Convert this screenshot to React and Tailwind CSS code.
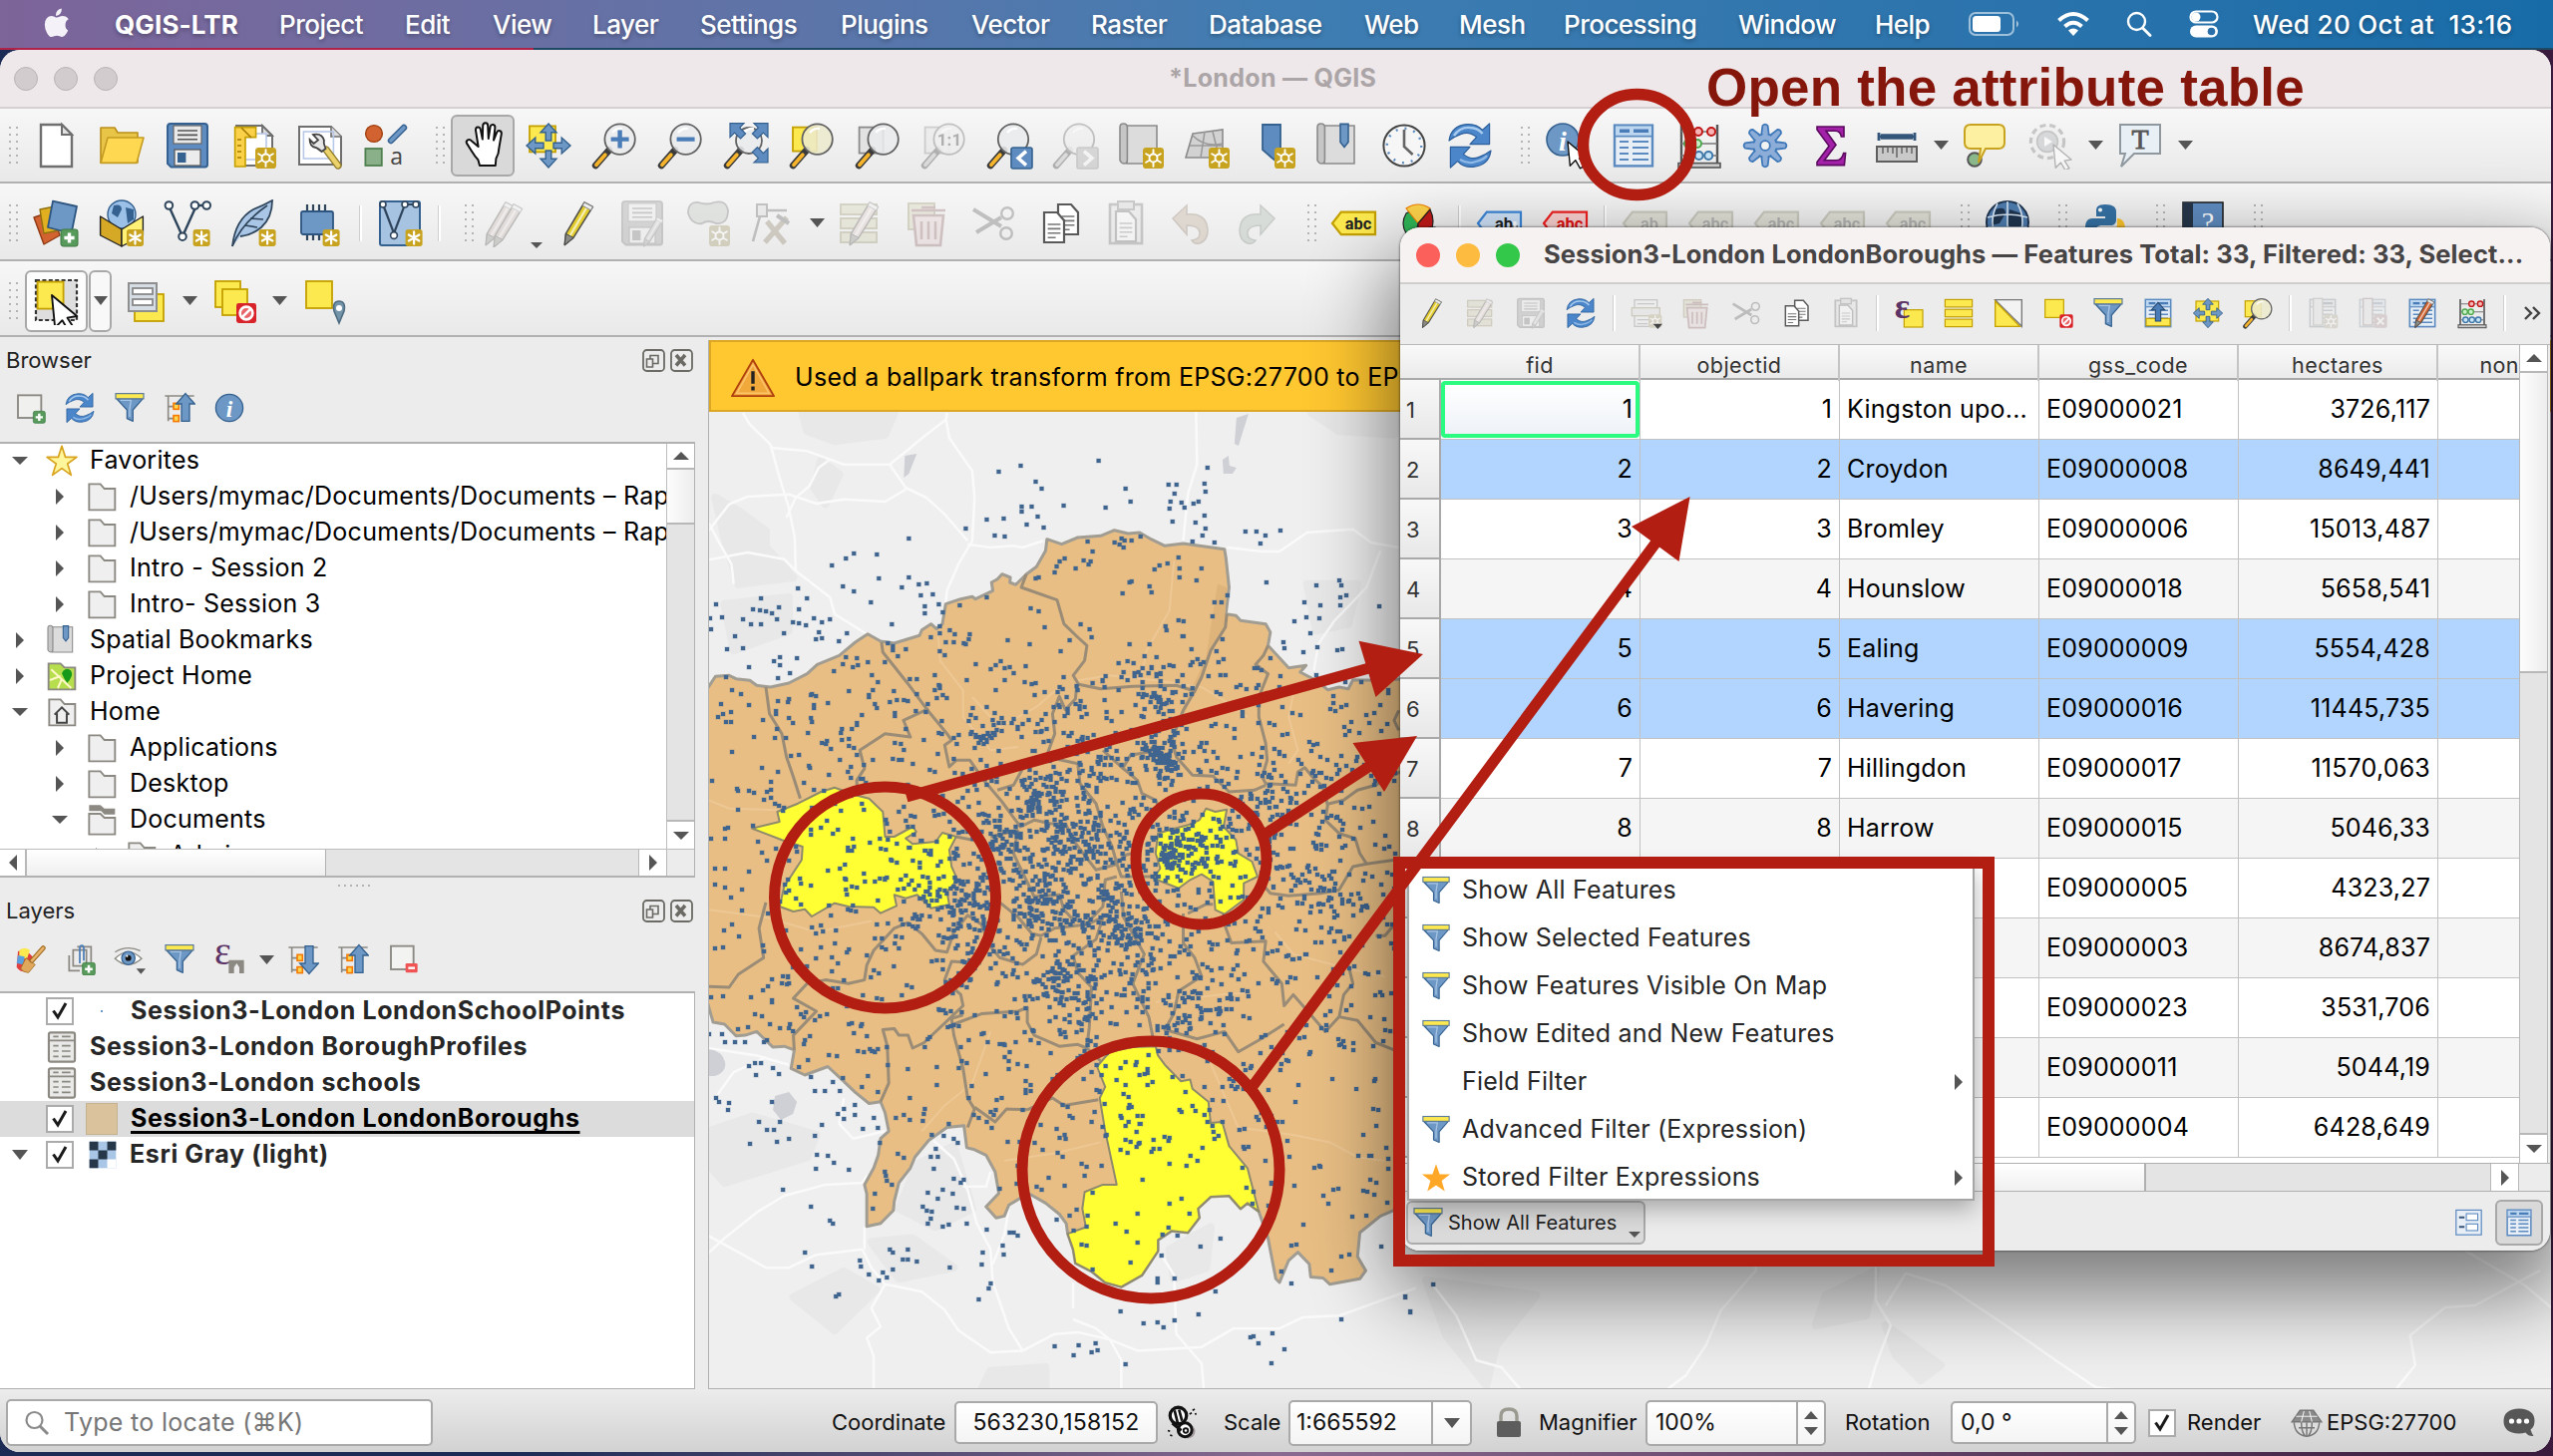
import React from "react";

/* ---------- small icon parts ---------- */
const G = "#6f6f6f";
const Gold = ({ x = 13, y = 13, s = 10.5 }) => (
  <g transform={`translate(${x} ${y}) scale(${s / 10})`}>
    <rect width="10" height="10" rx="1.6" fill="#c8a31f" />
    <path d="M5 1.4v7.2M1.9 3.2l6.2 3.6M8.1 3.2L1.9 6.8" stroke="#fff" strokeWidth="1.3" strokeLinecap="round" />
  </g>
);
const Gear = ({ x = 13, y = 13, s = 10.5 }) => (
  <g transform={`translate(${x} ${y}) scale(${s / 10})`}>
    <rect width="10" height="10" rx="1.6" fill="#c8a31f" />
    <path d="M5 1v8M1.5 3l7 4M8.5 3l-7 4" stroke="#fff" strokeWidth=".9" strokeLinecap="round" />
    <circle cx="5" cy="5" r="1.9" fill="#c8a31f" stroke="#fff" strokeWidth=".9" />
  </g>
);
const Plus = ({ x = 14, y = 14, s = 9 }) => (
  <g transform={`translate(${x} ${y}) scale(${s / 10})`}>
    <rect width="10" height="10" rx="1.6" fill="#589a5b" stroke="#3d7a41" strokeWidth=".6" />
    <path d="M5 2v6M2 5h6" stroke="#fff" strokeWidth="2" />
  </g>
);
const Stop = ({ x = 14, y = 14, s = 10 }) => (
  <g transform={`translate(${x} ${y}) scale(${s / 10})`}>
    <rect width="10" height="10" rx="1.2" fill="#d9232a" />
    <circle cx="5" cy="5" r="3.2" fill="#e8656a" stroke="#fff" strokeWidth="1.3" />
    <path d="M2.9 7.1l4.2-4.2" stroke="#fff" strokeWidth="1.3" />
  </g>
);
const Lens = ({ cx = 14.8, cy = 8.8, r = 7.6, fill = "#e9eaec" }) => (
  <g>
    <path d="M9.4 14.2L2.6 22" stroke="#3b3b3b" strokeWidth="3.4" strokeLinecap="round" />
    <path d="M7.4 16.6L3 21.6" stroke="#f5b42b" strokeWidth="1.9" strokeLinecap="round" />
    <circle cx={cx} cy={cy} r={r} fill={fill} fillOpacity=".88" stroke="#636363" strokeWidth=".9" />
    <path d="M11 5.5q2-2.6 5-2" stroke="#fff" strokeWidth="1.1" fill="none" />
  </g>
);
const Y = (p) => <rect fill="#fce94f" stroke="#c4a000" strokeWidth=".9" {...p} />;
const Arr = ({ t }) => <path transform={t} d="M0-11L4-6.6H1.4V-2.5h-2.8V-6.6H-4z" fill="#6d97c4" stroke="#34618f" strokeWidth=".7" />;
const Cross = () => (
  <g transform="translate(12 12)">
    <Arr t="" /><Arr t="rotate(90)" /><Arr t="rotate(180)" /><Arr t="rotate(270)" />
  </g>
);
const PencilShape = ({ c = "#e3cd2d", t = "" }) => (
  <g transform={t}>
    <path d="M15.5 1.5l4.2 2.2L10 19.2l-4.4 3.6.6-5.6z" fill={c} stroke="#55534c" strokeWidth=".8" strokeLinejoin="round" />
    <path d="M17.4 2.8L8.2 18.3" stroke="#fff" strokeOpacity=".65" strokeWidth="1.1" />
    <path d="M15.5 1.5l4.2 2.2-1 1.7-4.1-2.3z" fill="#eee" stroke="#888" strokeWidth=".5" />
    <path d="M6.2 17.2l3.8 2-4.4 3.6z" fill="#8a8a86" stroke="#444" strokeWidth=".5" />
  </g>
);
const FloppyShape = () => (
  <g>
    <path d="M3.5 1h17q1.5 0 1.5 1.5v19q0 1.2-1.2 1.2H3.8L2 21V2.5Q2 1 3.5 1z" fill="#5f8cc0" stroke="#34618f" strokeWidth="1" />
    <rect x="5" y="2" width="14" height="9" fill="#e9e9e9" stroke="#666" strokeWidth=".6" />
    <path d="M7 4.5h10M7 6.7h10M7 8.9h10" stroke="#555" strokeWidth=".8" />
    <rect x="5.5" y="14" width="13" height="8" fill="#ececec" stroke="#555" strokeWidth=".6" />
    <rect x="7" y="15.5" width="4.2" height="5" fill="#34618f" />
  </g>
);
const GridShape = () => (
  <g>
    <rect x="2.5" y="1.8" width="19" height="20.4" fill="#e8eef6" stroke="#5b8ac0" strokeWidth="1.2" />
    <rect x="3" y="2.3" width="18" height="4.6" fill="#bcd6f0" />
    <path d="M5 4.6h5M12 4.6h7.5" stroke="#4a7db8" strokeWidth="1.8" />
    <path d="M3 7.3h18" stroke="#5b8ac0" strokeWidth=".9" />
    <path d="M5 10h4.5M11.5 10h8M5 13h4.5M11.5 13h8M5 16h4.5M11.5 16h8M5 19h4.5M11.5 19h8" stroke="#5b8ac0" strokeWidth="1.1" />
  </g>
);
const Scroll = () => (
  <g stroke="#8b8b8b" strokeWidth=".8">
    <path d="M5 2h15v19H5z" fill="#dcdcdc" />
    <path d="M1.5 2.8Q1.5 1 3.3 1T5.2 2.8V19q0 2-1.5 2t-2.2-1.6z" fill="#c6c6c6" />
  </g>
);
const Pointer = ({ x = 0, y = 0, s = 1, fill = "#fff", st = "#111" }) => (
  <path transform={`translate(${x} ${y}) scale(${s})`} d="M0 0l12 10-4.600.8 3.200 5-2.600 1.400-3-5.200L1.500 15.500z" fill={fill} stroke={st} strokeWidth=".9" strokeLinejoin="round" />
);
const Tag = ({ t = "abc", bg = "#fce94f", st = "#c4a000", c = "#222" }) => (
  <g>
    <path d="M1 12L5.4 6.300H22.500V17.600H5.400z" fill={bg} stroke={st} strokeWidth="1.1" />
    <text x="14" y="14.900" textAnchor="middle" fontSize="8.200" fontWeight="700" fill={c} fontFamily="Roboto, sans-serif">{t}</text>
  </g>
);
const FunnelShape = () => (
  <g>
    <path d="M2 5h20l-7.500 8.500v8.500l-4.500-2v-6.500z" fill="#6d97c4" stroke="#34618f" strokeWidth=".9" strokeLinejoin="round" />
    <path d="M5 6.300h8l-1 6.500 0 6" stroke="#a9c6e6" strokeWidth="1" fill="none" />
    <rect x="1.500" y="1.200" width="21" height="3.900" fill="#fce94f" stroke="#5c7a99" strokeWidth=".9" />
  </g>
);
const RefreshShape = () => (
  <g fill="#4a86c9" stroke="#2c5f9b" strokeWidth=".6" strokeLinejoin="round">
    <path d="M1.500 9.500Q2.500 2 10.500 1.300q5-.3 7.700 2.900L21.800 1v10.300H12l3.300-3.600Q11.500 4.600 7.600 6.200 4 7.500 1.500 9.500z" />
    <path d="M22.500 14.500Q21.500 22 13.500 22.700q-5 .3-7.700-2.900L2.200 23V12.700H12l-3.300 3.600q3.800 3.100 7.700 1.500 3.600-1.300 6.100-3.300z" />
    <path d="M4 7q3-4.500 8-4 4 .2 6.300 3" stroke="#a8cbf0" strokeWidth="1.200" fill="none" />
    <path d="M7 19q4 2.500 8 1 4-1 5.500-3" stroke="#8fb9e6" strokeWidth="1.100" fill="none" />
  </g>
);
const FolderShape = ({ y = 0 }) => <path transform={`translate(0 ${y})`} d="M2.500 2.500h8.500l3 3.500h8v16H2.500z" fill="#efefef" stroke="#8b8982" strokeWidth="1.400" />;
const Paper = () => (
  <g><path d="M3.500 2h13l5 5v15h-18z" fill="#fff" stroke="#6f6f6f" strokeWidth="1" /><path d="M16.500 2v5h5z" fill="#ddd" stroke="#6f6f6f" strokeWidth=".9" /></g>
);
const Sheet = ({ x, y, w = 10 }) => (
  <g transform={`translate(${x} ${y})`}>
    <path d={`M0 0h${w - 3.5}l3.500 4v11H0z`} fill="#fff" stroke="#5a5a5a" strokeWidth="1.100" />
    <path d="M1.800 6h6.400M1.800 8.200h6.400M1.800 10.400h6.400M1.800 12.600h4" stroke="#777" strokeWidth=".8" />
  </g>
);
const V = () => (
  <g stroke="#2f455c" fill="#fff" strokeWidth="1">
    <path d="M2.500 3L9.500 18.500 16.500 3H22" fill="none" strokeWidth="1.200" />
    <circle cx="2.700" cy="3" r="1.900" /><circle cx="9.500" cy="18.600" r="1.900" /><circle cx="15.700" cy="3" r="1.900" /><circle cx="21.600" cy="3" r="1.900" />
  </g>
);
const Tree = ({ down }) => (
  <g>
    <path d="M1 3h22M3.500 3v19M3.500 11h5M3.500 20h5" stroke="#8b8982" strokeWidth="1.200" fill="none" />
    <rect x="7.500" y="8.500" width="4" height="4.500" fill="#fcd64f" stroke="#f57900" strokeWidth="1.200" /><rect x="7.500" y="17.700" width="4" height="4.500" fill="#fcd64f" stroke="#f57900" strokeWidth="1.200" />
    <path transform={down ? "translate(0 24) scale(1 -1)" : ""} d="M16.500 1.200L23.500 9h-4v13h-6V9h-4z" fill="#6d97c4" stroke="#34618f" strokeWidth="1" />
  </g>
);

const ICONS = {
  doc: <g><path d="M4.500 1.500h10.500l5 5v16H4.500z" fill="#fff" stroke={G} strokeWidth="1.200" /><path d="M15 1.500v5h5z" fill="#e2e2e2" stroke={G} strokeWidth="1" /></g>,
  folder: <g strokeLinejoin="round"><path d="M1.500 3h7l1.500 2.500h10v15H1.500z" fill="#e8c547" stroke="#b98f1a" strokeWidth=".8" /><path d="M5 8h18l-3.500 12.700H1.500z" fill="#fdd850" stroke="#c49a22" strokeWidth=".8" /></g>,
  floppy: <FloppyShape />,
  layoutNew: <g><Paper /><rect x="6.500" y="6" width="12" height="13" fill="#fff" stroke="#b8c8e8" strokeWidth=".8" /><path d="M2.800 2.800h10.500v5H8V22.500H2.800z" fill="#fcd14a" stroke="#c4a000" strokeWidth=".8" /><path d="M4 9h2M4 12h2M4 15h2M4 18h2M6 3l5 5" stroke="#a37c00" strokeWidth=".8" /><Gear /></g>,
  layoutMgr: <g><path d="M2 2.500h16l5 5V21.500H2z" fill="#fff" stroke={G} strokeWidth="1" /><path d="M18 2.500v5h5" fill="#ddd" stroke={G} strokeWidth=".8" /><rect x="4.200" y="5" width="15" height="13.500" fill="none" stroke="#b8c8e8" strokeWidth=".8" /><path d="M15.500 14l6 8" stroke="#8f7a2a" strokeWidth="3.600" strokeLinecap="round" /><path d="M15.500 14l6 8" stroke="#ecd26a" strokeWidth="2.300" strokeLinecap="round" /><path d="M9 6.500q4.500-1 5.500 3-.5 1 .8 4l-2 1.500q-2.500-2-3-2-3-.5-3-4l2 2 2.200-1.800z" fill="#e6e6e6" stroke="#444" strokeWidth=".9" /></g>,
  style: <g><circle cx="6.500" cy="6" r="4.200" fill="#d2622f" stroke="#a04010" strokeWidth=".7" /><path d="M15 9.500L21.500 3" stroke="#34618f" strokeWidth="3.200" strokeLinecap="round" /><path d="M15 9.500L21.500 3" stroke="#6d97c4" strokeWidth="1.800" strokeLinecap="round" /><rect x="2.200" y="13.500" width="8.200" height="8.500" fill="#8ab08a" stroke="#4e7f4e" strokeWidth=".9" /><text x="17.800" y="21.500" textAnchor="middle" fontSize="11.500" fill="#444" fontFamily="Open Sans, sans-serif">a</text></g>,
  hand: <path d="M8.300 12.500L7 4.300q-.1-1.500 1-1.600t1.400 1.100l1 5L10.600 2q.1-1.400 1.300-1.400T13.100 2l.3 6.500.9-6q.3-1.200 1.400-1t1 1.500l-.7 6.300 1.600-4q.5-1 1.500-.7t.8 1.600l-1.200 7q-.1 3-1.500 5.300l-.3 3.500H9l-.8-2.900q-1.700-1.800-3.400-4.600l-2.300-3.700q-.5-1 .5-1.600t1.900.4z" fill="#fff" stroke="#111" strokeWidth="1" strokeLinejoin="round" transform="translate(1.500 0)" />,
  panSel: <g><Y x="2.500" y="2.200" width="13" height="13" /><Cross /></g>,
  zoomIn: <g><Lens /><path d="M14.800 4.300v9M10.300 8.800h9" stroke="#4a7db8" strokeWidth="2.200" /></g>,
  zoomOut: <g><Lens /><path d="M10.300 8.800h9" stroke="#4a7db8" strokeWidth="2.200" /></g>,
  zoomFull: <g><Lens cx={13.500} cy={9.500} r={6.500} /><g fill="#5f8cc0" stroke="#34618f" strokeWidth=".6"><path d="M4 .8h7L8.800 3l3 3-2.500 2.500-3-3L4 7.800z" /><path d="M23 .8h-7L18.200 3l-3 3 2.500 2.500 3-3L23 7.800z" /><path d="M23 20.500h-7l2.200-2.200-3-3 2.500-2.500 3 3L23 13.500z" /></g></g>,
  zoomSel: <g><Y x="2.500" y="2.800" width="12" height="12" /><Lens fill="#ece9cc" /></g>,
  zoomLayer: <g><rect x="2.800" y="2.800" width="12" height="13" fill="#e2e2e2" stroke="#8a8a8a" strokeWidth=".9" /><Lens /></g>,
  zoom11: <g opacity=".35" className="grayscale"><rect x="2.800" y="2.800" width="12" height="13" fill="#e2e2e2" stroke="#8a8a8a" strokeWidth=".9" /><Lens /><text x="15" y="12" textAnchor="middle" fontSize="8.500" fontWeight="700" fill="#333" fontFamily="Roboto, sans-serif">1:1</text></g>,
  zoomLast: <g><Lens cx={14} /><rect x="13" y="13" width="10.500" height="10.500" rx="1" fill="#5f8cc0" stroke="#34618f" strokeWidth=".8" /><path d="M20.500 14.800l-4 3.500 4 3.500" stroke="#fff" strokeWidth="1.700" fill="none" /></g>,
  zoomNext: <g opacity=".35" className="grayscale"><Lens cx={14} /><rect x="13" y="13" width="10.500" height="10.500" rx="1" fill="#aaa" stroke="#888" strokeWidth=".8" /><path d="M16.500 14.800l4 3.500-4 3.500" stroke="#fff" strokeWidth="1.700" fill="none" /></g>,
  newMap: <g><Scroll /><Gear /></g>,
  new3d: <g><path d="M5 6l15-2v14H1.500z" fill="#d2d2d2" stroke="#8b8b8b" strokeWidth=".8" /><path d="M3.500 12h16M11 5L9 18M5 7q6 6 15 4M15 5l3 12" stroke="#9a9a9a" strokeWidth=".8" fill="none" /><Gear /></g>,
  bmNew: <g><path d="M7 1.500h9v20L11.500 18 7 14z" fill="#5f8cc0" stroke="#34618f" strokeWidth=".9" /><Gear /></g>,
  bmShow: <g><Scroll /><path d="M13 1.200h4v9l-2 2.500-2-2.500z" fill="#6d97c4" stroke="#34618f" strokeWidth=".8" /></g>,
  clock: <g><circle cx="12" cy="12" r="10.300" fill="#f6f6f6" stroke="#444" strokeWidth="1" /><circle cx="12" cy="12" r="8.600" fill="none" stroke="#5f8cc0" strokeWidth="1.200" strokeDasharray="1 3.500" /><path d="M12 4v8.500l4.300 4" stroke="#666" strokeWidth="1.300" fill="none" /></g>,
  refresh: <RefreshShape />,
  identify: <g><circle cx="9.500" cy="9" r="8" fill="#6d97c4" stroke="#34618f" strokeWidth=".8" /><text x="9.500" y="14.300" textAnchor="middle" fontSize="14" fontStyle="italic" fontWeight="700" fill="#fff" fontFamily="Liberation Serif, serif">i</text><Pointer x={12} y={10} s={.78} /></g>,
  info: <g><circle cx="12" cy="12" r="10.200" fill="#6d97c4" stroke="#34618f" strokeWidth="1" /><text x="12" y="18.500" textAnchor="middle" fontSize="17.500" fontStyle="italic" fontWeight="700" fill="#fff" fontFamily="Liberation Serif, serif">i</text></g>,
  table: <GridShape />,
  abacus: <g><path d="M3 1.500v20M21 1.500v20" stroke="#555" strokeWidth="1.200" /><path d="M3 5h18M3 11h18M3 17h18" stroke="#777" strokeWidth=".8" /><g strokeWidth="1"><g fill="#f7b4b4" stroke="#c01818"><circle cx="11.500" cy="5" r="2" /><circle cx="18" cy="5" r="2" /></g><g fill="#c6f0c6" stroke="#4fa84f"><circle cx="6.500" cy="11" r="2" /><circle cx="11" cy="11" r="2" /></g><g fill="#c8e4f7" stroke="#3f78a8"><circle cx="7" cy="17" r="2" /><circle cx="11.800" cy="17" r="2" /><circle cx="16.600" cy="17" r="2" /></g></g><rect x="1.500" y="20.800" width="21" height="2.200" fill="#ccc" stroke="#555" strokeWidth=".8" /></g>,
  gear: (
    <g fill="#8cadd8" stroke="#3f78b8" strokeWidth=".9" strokeLinejoin="round">
      {[0, 45, 90, 135, 180, 225, 270, 315].map(a => <path key={a} transform={`rotate(${a} 12 12)`} d="M10 7.500L10.700 2q1.300-1.400 2.600 0L14 7.500" />)}
      <circle cx="12" cy="12" r="5.800" />
      <circle cx="12" cy="12" r="5.300" stroke="none" />
      {[0, 45, 90, 135, 180, 225, 270, 315].map(a => <path key={a} transform={`rotate(${a} 12 12)`} d="M10.500 7.800L11 5h2l.5 2.800z" stroke="none" />)}
      <circle cx="12" cy="12" r="2.400" fill="#f2f2f2" />
    </g>
  ),
  sigma: <path d="M5 2.500h13.500v5h-1.300Q16.700 4.600 14 4.600H9.500l5 7-5.800 7.800h5.800q3 0 3.800-3.600h1L18.700 21.800H5v-1.500l6-8.100L5 4z" fill="#a320a8" stroke="#5c0a60" strokeWidth=".8" />,
  ruler: <g><path d="M3 5.500v4M21 5.500v4M3 7.500h18" stroke="#34557a" strokeWidth="1.400" /><path d="M4 7.500h16" stroke="#34557a" strokeWidth="2.800" /><rect x="2" y="12.500" width="20" height="7.500" fill="#c9c9c9" stroke="#5e5e5e" strokeWidth="1" /><path d="M5 13v3M7.500 13v2.500M10 13v3M12 13v5M14.500 13v3M17 13v2.500M19.500 13v3" stroke="#5e5e5e" strokeWidth=".7" /></g>,
  tip: <g><circle cx="7" cy="19" r="3.400" fill="#8ab88a" stroke="#555" strokeWidth="1" /><path d="M5 1.500h14q3 0 3 3v6q0 3-3 3h-6.500L9 20.500l1-7H5q-3 0-3-3v-6q0-3 3-3z" fill="#fdf0a0" stroke="#c8a31f" strokeWidth="1" /></g>,
  action: <g opacity=".5"><circle cx="10.500" cy="10" r="8.300" fill="#eee" stroke="#999" strokeWidth="1.600" strokeDasharray="3 2" /><circle cx="10.500" cy="10" r="5.200" fill="#b9bdc1" stroke="#999" strokeWidth=".8" /><path d="M9 7.500v5l4-2.500z" fill="#fff" /><Pointer x={13.500} y={11.500} s={.75} st="#777" /></g>,
  text: <g><path d="M2 1.500h20V16H9l-6.500 6.500L4.500 16H2z" fill="#e8eff5" stroke="#8f989e" strokeWidth="1" /><text x="12" y="13.600" textAnchor="middle" fontSize="14" fill="#555" stroke="#555" strokeWidth=".4" fontFamily="Liberation Serif, serif">T</text></g>,
  data: <g strokeLinejoin="round"><path d="M1 9l9-3 4 12-8 4.500z" fill="#d2622f" stroke="#8f3a14" strokeWidth=".7" /><path d="M4 5l10-2 2 12-10 2z" fill="#e0b020" stroke="#8f7010" strokeWidth=".7" /><path d="M10.500.8L22.500 3.500 19.800 17 8 14z" fill="#6d97c4" stroke="#2e5580" strokeWidth=".9" /><Plus x={14.500} y={15} s={8.500} /></g>,
  geopkg: <g strokeLinejoin="round"><circle cx="12" cy="7.500" r="7" fill="#9cc1e8" stroke="#34618f" strokeWidth=".7" /><path d="M8 3q4-1 4 2l-2 4-3-2zM14 4l4 1v5l-3 2z" fill="#34618f" /><path d="M1.300 8.500L12 15v8.500L1.300 18z" fill="#d5a826" stroke="#222" strokeWidth=".7" /><path d="M22.700 8.500L12 15v8.500L22.700 18z" fill="#fff176" stroke="#222" strokeWidth=".7" /><Gold x={14.500} y={15} s={8.500} /></g>,
  shp: <g><V /><Gold x={14.800} y={15} s={8.500} /></g>,
  feather: <g><path d="M1.500 23.500Q3 10 12 5q5-2 9.500-4.500Q21.500 9 16 14q-5 4-10.500 4.500" fill="#a9c6e6" stroke="#2f455c" strokeWidth=".9" /><path d="M1.500 23.500Q6 12 19 3M8 13l6 1M10.500 9.500l6.500.5" stroke="#2f455c" strokeWidth=".8" fill="none" /><Gold x={14.800} y={15} s={8.500} /></g>,
  chip: <g><path d="M6 2.500v18M9 2.500v18M12 2.500v18M15 2.500v18" stroke="#2f455c" strokeWidth="1.100" /><rect x="3" y="6" width="16" height="11.500" rx="1" fill="#6d97c4" stroke="#2e5580" strokeWidth=".9" /><Gold x={13.800} y={15} s={8.500} /></g>,
  virtual: <g><rect x="2" y="1" width="20" height="22" rx="1" fill="#a6c3e2" stroke="#34618f" strokeWidth="1" /><path d="M3.500 2.500L9 17 14.500 2.500h6" stroke="#2f455c" strokeWidth="1.100" fill="none" /><g fill="#fff" stroke="#2f455c" strokeWidth=".8"><circle cx="3.500" cy="2.500" r="1.500" /><circle cx="9" cy="18" r="1.700" /><circle cx="14.500" cy="2.500" r="1.500" /><circle cx="20" cy="2.500" r="1.500" /></g><Gold x={14.800} y={15} s={8.500} /></g>,
  pencils: <g opacity=".32"><PencilShape c="#c4b0aa" t="translate(-3 0)" /><PencilShape c="#c4b0aa" t="translate(1 1)" /></g>,
  pencil: <PencilShape />,
  savePencil: <g opacity=".27" className="grayscale"><FloppyShape /><PencilShape c="#c9aaa0" t="translate(9 8) scale(.68)" /></g>,
  blob: <g opacity=".5"><path d="M2 7q0-6 5-5.500 5 1.500 8 0 6-1.500 7 4 0 7-6 6.500-4-2-7 0-5 1-7-5z" fill="#ccd2cc" stroke="#999" strokeWidth=".9" /><g opacity=".8" className="grayscale-[.7]"><Gear x={12.500} y={13} /></g></g>,
  vertex: <g opacity=".4"><rect x="4" y="2.500" width="5" height="6" fill="#ddd" stroke="#777" /><path d="M9 5.500h10M5.500 8.500L2 21" stroke="#777" strokeWidth="1.300" /><path d="M8 21.500L19 9M9 11l9 11" stroke="#9b927c" strokeWidth="2.600" /><path d="M14 8l6 4" stroke="#777" strokeWidth="2" /></g>,
  multi: <g opacity=".33"><g fill="#cfcdae" stroke="#98906a" strokeWidth="1"><rect x="2" y="2.500" width="18" height="5" /><rect x="2" y="9.500" width="18" height="5" /><rect x="2" y="16.500" width="18" height="5" /></g><PencilShape c="#d8c4be" t="translate(1 0)" /></g>,
  trash: <g opacity=".33"><rect x="2.500" y="2" width="13" height="13" fill="#cfcdae" stroke="#98906a" /><path d="M5 8h15l-1.500 15h-12z" fill="#e2cccc" stroke="#8f6464" strokeWidth="1.300" /><path d="M4 5.500h17M9 4h7M9 11v9M12.500 11v9M16 11v9" stroke="#8f6464" strokeWidth="1.300" /></g>,
  scissors: <g opacity=".35" fill="none" stroke="#666" strokeWidth="1.200"><path d="M2 5l14 8.500M3.500 16.500L16 9" strokeWidth="2" /><circle cx="19" cy="7" r="2.900" /><circle cx="18.500" cy="17" r="2.900" /></g>,
  copy: <g><Sheet x={11} y={2.500} /><Sheet x={4} y={6.500} /></g>,
  paste: <g opacity=".3"><rect x="4" y="2.500" width="16" height="19.500" fill="#ddd" stroke="#666" strokeWidth="1.300" /><rect x="8" y="1" width="8" height="4" fill="#ccc" stroke="#666" /><Sheet x={7} y={6} /></g>,
  undo: <g opacity=".4"><path d="M2 9.500L9 3v4.500q10-1 10.500 8 0 5-4 6.500-3 .5-4-1.500 4.500-.5 4-4-.5-3.500-6.500-3.500v4.500z" fill="#c4b3a0" stroke="#a09080" strokeWidth=".8" /></g>,
  redo: <g opacity=".4"><path d="M20 9.500L13 3v4.500q-10-1-10.500 8 0 5 4 6.500 3 .5 4-1.500-4.500-.5-4-4 .5-3.500 6.500-3.500v4.500z" fill="#b4beb4" stroke="#909a90" strokeWidth=".8" /></g>,
  abc: <Tag />,
  pie: <g stroke="#222" strokeWidth=".6"><path d="M11 12V4l-6 3q-3 5 0 10l4 4z" fill="#2fb457" /><path d="M11 12L5 4.500q6-4 12 0z" fill="#fcd14a" stroke="#f08000" /><path d="M11 12l6-7q3 6 0 12l-6 3z" fill="#c01818" /><rect x="16.500" y="14" width="3" height="8" fill="#14904a" /></g>,
  abBlue: <g><Tag t="ab" bg="#cfe2f8" st="#3b86d8" /><path d="M19.500 13v6" stroke="#333" strokeWidth="2.600" /><path d="M19.500 11v6" stroke="#fff" strokeWidth="1.600" /></g>,
  abRed: <Tag bg="#fbd0d0" st="#f02020" c="#e01010" />,
  abGray: <g opacity=".5"><Tag bg="#d2d2bf" st="#a4a490" c="#777" /></g>,
  ab2: <g opacity=".5"><Tag t="ab" bg="#d2d2bf" st="#a4a490" c="#777" /></g>,
  globe: <g><circle cx="12" cy="11.500" r="10.500" fill="#4f7db0" stroke="#1f3550" strokeWidth="1" /><path d="M6 5q5-2 5 2l-3 5-4 1zM13 5l6 2v6l-4 4-3-5z" fill="#1f3550" /><path d="M2 9q10-3 20 0M2 14h20M12 1v21M7 2q-5 9 0 19M17 2q5 9 0 19" stroke="#d8e6f5" strokeWidth=".8" fill="none" /><rect x="8" y="14" width="3.500" height="4" rx="1" fill="#111" /><rect x="13" y="14" width="3.500" height="4" rx="1" fill="#111" /></g>,
  python: <g><path d="M12 2.500c-4 0-4.500 1.500-4.500 3.500v2.500H12v1H5.500C3 9.500 2 11.500 2 14s1 5 3.500 5H7v-3c0-2 1.500-3 3.500-3h4c2 0 3-1 3-3V6c0-2-1.500-3.500-5.500-3.500z" fill="#3572a5" /><path d="M18 9.500v3c0 2-1.500 3.500-3.500 3.500h-4c-2 0-3 1-3 3v2h9c3 0 5.500-3 5.500-6s-1-5.500-4-5.500z" fill="#fdc52c" /><circle cx="9.500" cy="5.300" r="1" fill="#fff" /></g>,
  help: <g><rect x="2" y="1.500" width="20" height="21" fill="#5f8cc0" stroke="#222" strokeWidth=".8" /><rect x="2" y="1.500" width="5" height="21" fill="#26374a" /><text x="14.500" y="16" textAnchor="middle" fontSize="14" fill="#fff" fontFamily="Liberation Serif, serif">?</text></g>,
  select: <g><rect x="1.500" y="1.500" width="20.500" height="20" fill="#dedede" stroke="#333" strokeWidth="1.100" strokeDasharray="2 1.200" /><Y x="2.300" y="2.300" width="13" height="13.500" /><Pointer x={9.500} y={9} s={1.050} /></g>,
  selForm: <g><Y x="6" y="8.500" width="14.500" height="13.500" /><rect x="3" y="3" width="14" height="14" fill="#d7dde4" stroke="#8f8f8f" strokeWidth="1" /><rect x="5" y="5.500" width="10" height="3" fill="#fff" stroke="#888" strokeWidth=".9" /><rect x="5" y="11" width="10" height="3" fill="#fff" stroke="#888" strokeWidth=".9" /></g>,
  deselAll: <g><Y x="2" y="2" width="12.500" height="13" /><Y x="5.500" y="6" width="12.500" height="13" /><Stop x={12.500} y={13} /></g>,
  selLoc: <g><Y x="1" y="2" width="13" height="13.500" /><path d="M17.500 23L15 17q-1-5 2.500-5t2.500 5z" fill="#7494aa" stroke="#4d6b80" strokeWidth=".8" /><circle cx="17.500" cy="15.500" r="1.500" fill="#fff" /></g>,
  eps: <g><Y x="8.500" y="9.500" width="14" height="13" /><text x="7" y="15.500" textAnchor="middle" fontSize="27" fill="#5c3566" fontFamily="Liberation Serif, serif" fontWeight="700">ε</text></g>,
  epsF: <g><text x="7" y="15.500" textAnchor="middle" fontSize="30" fill="#5c3566" fontFamily="Liberation Serif, serif">ε</text><path d="M11.500 12.500h11.500v10h-3.500v-4.500l-2-3-2 3v4.500h-4z" fill="#8b8982" /></g>,
  bars: <g><Y x="1.800" y="1.800" width="20.400" height="5.600" /><Y x="1.800" y="9.200" width="20.400" height="5.600" /><Y x="1.800" y="16.600" width="20.400" height="5.600" /></g>,
  invert: <g><path d="M2 2h20v20z" fill="#f3f3f3" stroke="#777" strokeWidth="1" /><path d="M2 3l18.500 19H2z" fill="#fce94f" stroke="#c4a000" strokeWidth="1" /></g>,
  desel: <g><Y x="2" y="1.800" width="14" height="13.500" /><Stop x={13} y={13} /></g>,
  funnel: <FunnelShape />,
  moveTop: <g><GridShape /><Y x="3" y="16" width="18" height="5.500" /><path d="M12 4l5 5.500h-3V18h-4V9.500H7z" fill="#4a7db8" stroke="#26486e" strokeWidth=".8" /></g>,
  panY: <g><Y x="3" y="3" width="17" height="15" /><Cross /></g>,
  colNew: <g opacity=".3" className="grayscale-[.8]"><GridShape /><rect x="5" y="1" width="7" height="20" fill="#ddd" stroke="#98906a" /><Gear /></g>,
  colDel: <g opacity=".25" className="grayscale-[.6]"><GridShape /><rect x="5" y="1" width="7" height="20" fill="#ddd" stroke="#a05050" /><rect x="13" y="13" width="10" height="10" rx="1.500" fill="#c07070" /><path d="M15.500 15.500l5 5M20.500 15.500l-5 5" stroke="#fff" strokeWidth="1.500" /></g>,
  calcEdit: <g><GridShape /><PencilShape c="#d2622f" t="translate(1 0)" /></g>,
  rowNew: <g><g opacity=".35"><rect x="3" y="2" width="17" height="20" fill="#eee" stroke="#888" /><rect x="1" y="8" width="21" height="6" fill="#ddd" stroke="#98906a" /><path d="M5 5h13M5 17h13M5 20h8" stroke="#888" /><g className="grayscale-[.7]"><Gear x={13.500} y={13} s={10} /></g></g><path d="M17 20h7l-3.500 4z" fill="#444" /></g>,
  layerAdd: <g><rect x="3" y="2.500" width="17.500" height="17" fill="#f0f0ee" stroke="#8b8982" strokeWidth="1.400" /><Plus x={14.500} y={14.500} /></g>,
  tree: <Tree />,
  treeDown: <Tree down />,
  remove: <g><rect x="3" y="2" width="17" height="17.500" fill="#f3f3f2" stroke="#8b8982" strokeWidth="1.400" /><rect x="14" y="15" width="9" height="7" rx="1" fill="#ef5353" /><path d="M16 18.500h5" stroke="#fff" strokeWidth="1.800" /></g>,
  brush: <g><path d="M3 6l5-2 8 8-7 9q-4 1-7-3z" fill="#e33d3d" /><path d="M4 5q4-3 8 0l-2 6-6 1z" fill="#fce94f" /><path d="M3 9l5 1-1 6-5-1z" fill="#5aa0e0" /><path d="M9 11l7 5-5 6q-4 0-6-3z" fill="#e0a85c" stroke="#a06a20" strokeWidth=".6" /><path d="M13.500 13L22 3.500" stroke="#a06a20" strokeWidth="3.600" strokeLinecap="round" /><path d="M13.500 13L22 3.500" stroke="#e8b469" strokeWidth="2" strokeLinecap="round" /></g>,
  group: <g fill="none" stroke="#8b8982" strokeWidth="1.300"><path d="M4 9v11.500h8M7 5v12h10V5zM10 2.500h10.500V14" /><path d="M12 15V3.500q0-2 1.500-2T15 3.500V13" stroke="#4a7db8" /><Plus x={14} y={14.500} s={9.500} /></g>,
  eye: <g><path d="M1 11.500Q11 1.500 21 11.500 11 20.500 1 11.500z" fill="#fff" stroke="#8b8982" strokeWidth="1" /><path d="M1 6.500Q10 1 20 5.500" stroke="#8b8982" fill="none" strokeWidth=".9" /><circle cx="11" cy="11" r="5" fill="#6d97c4" stroke="#34618f" strokeWidth=".9" /><circle cx="11" cy="11" r="2.200" fill="#111" /><circle cx="10" cy="9.500" r=".8" fill="#fff" /><path d="M17 19h7l-3.500 4z" fill="#555" /></g>,
  dirFolder: <FolderShape />,
  dirOpen: <g><path d="M2.500 1h8.500l3 2.500h8V8H14l-2.500-2.500h-9z" fill="#8b8982" /><path d="M2.500 7.500h8.500l3 3h8V23H2.500z" fill="#efefef" stroke="#8b8982" strokeWidth="1.400" /></g>,
  star: <path d="M12 1l2.700 8.300h8.500l-6.900 5 2.700 8.500L12 17.700l-7 5.100 2.700-8.500-6.900-5h8.500z" fill="#fff59a" stroke="#d9a520" strokeWidth="1.300" strokeLinejoin="round" />,
  starO: <path d="M12 1l2.900 8.200h8.300l-6.700 5.200 2.500 8.400L12 17.900l-7 4.900 2.500-8.400L.8 9.200h8.300z" fill="#ffa828" />,
  projHome: <g><path d="M2 2.500h9l3 3h8v16.500H2z" fill="#b7de4c" stroke="#8b8982" strokeWidth="1.400" /><path d="M3 15l8-3M4 7l15 14M9 21l3-7" stroke="#fff8c8" strokeWidth="1.500" /><path d="M13 8q3-3 6 0 2 4-3 9-3-4-4-7z" fill="#179a1a" /></g>,
  home: <g><FolderShape /><path d="M6.500 14L12 8.500l5.500 5.500M8.300 13v7H15.700v-7" fill="none" stroke="#444" strokeWidth="1.500" /></g>,
  rows: <g><rect x="2.200" y="1" width="19.600" height="22" rx="1.500" fill="#e9e9e7" stroke="#8b8982" strokeWidth="1.600" /><path d="M2.200 7h19.600M5.500 4h4M12 4h6.500M5.500 11h4M12 11h6.500M5.500 15h4M12 15h6.500M5.500 19h4M12 19h6.500" stroke="#8b8982" strokeWidth="1.300" /></g>,
  raster: <g><rect x="2" y="2" width="20" height="20" fill="#a9c6e6" /><path d="M2 2h6.600v6.600H2zM15.400 2H22v6.600h-6.600zM8.600 8.600h6.800v6.800H8.600zM2 15.400h6.600V22H2z" fill="#26374a" /><path d="M15.400 15.400H22V22h-6.600z" fill="#fff" /></g>,
  form: <g><rect x="1.500" y="2" width="21" height="20.500" fill="#e8eef6" stroke="#5b8ac0" strokeWidth="1" /><rect x="10" y="5" width="9.500" height="5.500" fill="#fff" stroke="#5b8ac0" strokeWidth=".9" /><rect x="10" y="13.500" width="9.500" height="5.500" fill="#fff" stroke="#5b8ac0" strokeWidth=".9" /><path d="M4 8h4.500M4 16h4.500" stroke="#34557a" strokeWidth="1.600" /></g>,
  gps: <g stroke="#111" strokeWidth="1.200"><circle cx="15.500" cy="17.500" r="4.800" fill="#a39b9b" stroke="none" /><circle cx="13.500" cy="16.500" r="4.600" fill="#fff" strokeWidth="2" /><circle cx="14" cy="17" r="1.500" fill="none" /><ellipse cx="9" cy="7" rx="5.500" ry="5.500" fill="#fff" strokeWidth="2.200" /><path d="M6.500 3.500l2 8M9.500 3l2 7.500" fill="none" strokeWidth="1.800" /><path d="M5 12l6 5" strokeWidth="2" /><path d="M2 17l1.500.5M3.500 20l1.500.5M16.500 6l1.500-.8M18.500 3.500l1.500-.8M20 6l1.200-.3" fill="none" /></g>,
  crs: <g fill="none" stroke="#777" strokeWidth="1.100"><path d="M7 2.500h10L23 11H1z" fill="#8a8a8a" /><path d="M10 3L8 11M14 3l2 8M4 7h16" stroke="#eee" strokeWidth=".8" /><path d="M2.500 11.500Q3 21 12 22q9-1 9.500-10.500M6 15.500h12M12 11.500V22M8 11.500Q8 19 11 22M16 11.500q0 7.500-3 10.500" /></g>,
};

const Icon = ({ n, c = "size-12" }) => (
  <svg viewBox="0 0 24 24" className={`${c} shrink-0`}>{ICONS[n]}</svg>
);
const Tri = ({ dir = "down", c = "w-4 h-2.5" }) => {
  const d = { down: "M0 0h10L5 10z", up: "M0 10h10L5 0z", right: "M0 0v10l10-5z", left: "M10 0v10L0 5z" }[dir];
  return <svg viewBox="0 0 10 10" preserveAspectRatio="none" className={`${c} shrink-0`}><path d={d} fill="#555" /></svg>;
};
const Grip = ({ c = "w-8" }) => (
  <div className={`${c} flex h-10 shrink-0 items-center justify-end pr-[5px]`}>
    <div className="grid grid-cols-2 gap-x-[5px] gap-y-[5px]">
      {Array.from({ length: 12 }, (_, i) => <i key={i} className="h-[2px] w-[2px] bg-[#b4b4b4]" />)}
    </div>
  </div>
);
const Sep = ({ c = "w-4" }) => <div className={`${c} flex h-9 shrink-0 justify-center`}><i className="h-full w-[3px] border-l border-[#cfcfcf] bg-white" /></div>;
const Cells = ({ list, w = "w-[66px]", s = "size-12" }) => list.map((n, i) => (
  <div key={n + i} className={`${w} flex shrink-0 items-center justify-center`}><Icon n={n} c={s} /></div>
));
const Drop = ({ c = "w-6" }) => <div className={`${c} flex shrink-0 justify-center`}><Tri c="h-[9px] w-[15px]" /></div>;

/* ---------- menu bar ---------- */
const MENU = [
  ["Project", "w-[126px]"], ["Edit", "w-[88px]"], ["View", "w-[100px]"], ["Layer", "w-[108px]"], ["Settings", "w-[141px]"],
  ["Plugins", "w-[131px]"], ["Vector", "w-[120px]"], ["Raster", "w-[118px]"], ["Database", "w-[156px]"], ["Web", "w-[95px]"],
  ["Mesh", "w-[105px]"], ["Processing", "w-[175px]"], ["Window", "w-[137px]"], ["Help", "w-[94px]"],
];
const MenuBar = () => (
  <div className="flex h-12 shrink-0 items-center bg-linear-to-r from-[#7d6499] via-[#3f7db2] via-50% to-[#176ca8] text-[26px] font-medium tracking-[-0.02em] text-white [text-shadow:0_2px_4px_rgba(0,0,0,.3)]">
    <div className="flex w-[115px] shrink-0 pl-[43px]">
      <svg viewBox="0 0 24 30" className="h-8 w-7"><path d="M16.500.5q.4 3-1.300 5T11 7.500q-.3-2.800 1.300-4.700T16.500.5zM20 16q0-3.800 3-5.500-2-3-5.500-3-2 0-3.200.7t-2.200.7-2.300-.8Q8.300 7.500 7 7.500q-2.700 0-4.500 2T.6 15.600q0 4.400 2.200 8T7 27.300q1.200 0 2.400-.7t2.600-.7 2.600.7 2.400.6q2.300-.2 4-3.200 1-1.500 1.500-3Q20 20 20 16z" fill="#f4f1f8" /></svg>
    </div>
    <b className="w-[165px] shrink-0 font-bold tracking-[.005em]">QGIS-LTR</b>
    {MENU.map(([t, w]) => <span key={t} className={`${w} shrink-0`}>{t}</span>)}
    <svg viewBox="0 0 52 26" className="h-[26px] w-[88px] shrink-0 pr-9"><rect x="1" y="2" width="44" height="22" rx="6" fill="none" stroke="#fff" strokeOpacity=".55" strokeWidth="2" /><rect x="4" y="5" width="28" height="16" rx="3.500" fill="#fff" /><path d="M48 9.500q4 3.500 0 7z" fill="#fff" fillOpacity=".6" /></svg>
    <svg viewBox="0 0 34 26" className="h-[26px] w-[34px] shrink-0"><g fill="none" stroke="#fff" strokeWidth="4"><path d="M2.500 9.500Q17-3.500 31.500 9.500" /><path d="M8.500 15.500Q17 8 25.500 15.500" /></g><path d="M12 19.500q5-4 10 0L17 25z" fill="#fff" /></svg>
    <svg viewBox="0 0 26 26" className="ml-9 size-[26px] shrink-0"><circle cx="10.500" cy="10.500" r="8.500" fill="none" stroke="#fff" strokeWidth="2.400" /><path d="M16.500 17l7.500 7.500" stroke="#fff" strokeWidth="2.800" strokeLinecap="round" /></svg>
    <svg viewBox="0 0 30 28" className="ml-[37px] h-7 w-[30px] shrink-0"><rect x="1.500" y="1.500" width="27" height="11" rx="5.500" fill="none" stroke="#fff" strokeWidth="2.200" /><circle cx="7" cy="7" r="4.500" fill="#fff" /><rect x="1" y="15.500" width="28" height="12" rx="6" fill="#fff" /><circle cx="22.500" cy="21.500" r="3.800" fill="#2a6fa8" /></svg>
    <span className="ml-[34px] tracking-[.014em] whitespace-pre">Wed 20 Oct at  13:16</span>
  </div>
);

/* ---------- toolbars ---------- */
const bar = "flex shrink-0 items-center border-b-2 border-[#b1b1b1] bg-linear-to-b from-[#f7f7f7] to-[#e9e9e9]";
const Toolbars = () => (
  <>
    <div className={`${bar} h-[75px]`}>
      <Grip c="w-[23px]" />
      <Cells list={["doc", "folder", "floppy", "layoutNew", "layoutMgr", "style"]} />
      <Grip />
      <div className="flex w-[66px] shrink-0 justify-center"><div className="flex h-[62px] w-[64px] items-center justify-center rounded-md border-2 border-[#a8a8a8] bg-[#d9d9d9]"><Icon n="hand" /></div></div>
      <Cells list={["panSel", "zoomIn", "zoomOut", "zoomFull", "zoomSel", "zoomLayer", "zoom11", "zoomLast", "zoomNext", "newMap", "new3d", "bmNew", "bmShow", "clock", "refresh"]} />
      <Grip />
      <Cells list={["identify", "table", "abacus", "gear", "sigma", "ruler"]} />
      <Drop c="w-[22px]" />
      <Cells list={["tip", "action"]} />
      <Drop />
      <Cells list={["text"]} />
      <Drop />
    </div>
    <div className={`${bar} h-[78px] pt-[3px]`}>
      <Grip c="w-[23px]" />
      <Cells list={["data", "geopkg", "shp", "feather", "chip"]} />
      <Sep />
      <Cells list={["virtual"]} w="w-[64px]" />
      <Sep c="w-3.5" />
      <Grip c="w-[33px]" />
      <Cells list={["pencils"]} w="w-[52px]" /><div className="w-[14px] shrink-0 pt-11"><Tri c="h-1.5 w-3" /></div>
      <Cells list={["pencil", "savePencil", "blob", "vertex"]} w="w-[65.5px]" />
      <Drop c="w-[22px]" />
      <Cells list={["multi", "trash", "scissors", "copy", "paste", "undo", "redo"]} w="w-[66.5px]" />
      <Grip c="w-[29px]" />
      <Cells list={["abc", "pie"]} />
      <Sep c="w-[14px]" />
      <Cells list={["abBlue", "abRed"]} />
      <Sep c="w-[14px]" />
      <Cells list={["ab2", "abGray", "abGray", "abGray", "abGray"]} />
      <Grip c="w-[33px]" /><Cells list={["globe"]} />
      <Grip /><Cells list={["python"]} />
      <Grip /><Cells list={["help"]} />
      <Grip />
    </div>
    <div className={`${bar} h-[76px] pt-[5px]`}>
      <Grip c="w-[23px]" />
      <div className="ml-0.5 flex h-[62px] w-[63px] shrink-0 items-center justify-center rounded-md border-2 border-[#a8a8a8] bg-[#fcfcfc]"><Icon n="select" /></div>
      <div className="ml-px flex h-[62px] w-[23px] shrink-0 items-center justify-center rounded-md border-2 border-[#a8a8a8] bg-[#f8f8f8]"><Tri c="h-[9px] w-[14px]" /></div>
      <Cells list={["selForm"]} w="w-[69px]" /><Drop c="w-[19px]" />
      <Cells list={["deselAll"]} w="w-[72px]" /><Drop c="w-[17px]" />
      <Cells list={["selLoc"]} w="w-[80px]" />
    </div>
  </>
);

/* ---------- side panels ---------- */
const PanelTitle = ({ t, c }) => (
  <div className={`${c} flex w-[697px] shrink-0 items-center justify-between pr-[2px] pl-[6px] text-[22px] text-[#222]`}>
    {t}
    <div className="flex gap-[5px]">
      {[<path key="a" d="M4.500 10h6v8h-6zM8 10V6.500h8v8h-5" />, <path key="b" d="M6 6l9 10.500M15 6L6 16.500" strokeWidth="3.500" />].map((p, i) => (
        <svg key={i} viewBox="0 0 23 23" className="size-[23px]" fill="none" stroke="#6b6a65" strokeWidth="1.600"><rect x="1" y="1" width="21" height="21" rx="3.500" strokeWidth="1.800" />{p}</svg>
      ))}
    </div>
  </div>
);
const TREE = [
  [0, "down", "star", "Favorites"],
  [1, "right", "dirFolder", "/Users/mymac/Documents/Documents – Rap"],
  [1, "right", "dirFolder", "/Users/mymac/Documents/Documents – Rap"],
  [1, "right", "dirFolder", "Intro - Session 2"],
  [1, "right", "dirFolder", "Intro- Session 3"],
  [0, "right", "bmShow", "Spatial Bookmarks"],
  [0, "right", "projHome", "Project Home"],
  [0, "down", "home", "Home"],
  [1, "right", "dirFolder", "Applications"],
  [1, "right", "dirFolder", "Desktop"],
  [1, "down", "dirOpen", "Documents"],
  [2, "right", "dirFolder", "Admin"],
];
const PAD = ["pl-[6px]", "pl-[46px]", "pl-[86px]"];
const Browser = () => (
  <>
    <PanelTitle t="Browser" c="mt-[6px] h-[34px]" />
    <div className="mb-[3px] flex h-[62px] shrink-0 items-center pl-[5px]"><Cells list={["layerAdd", "refresh", "funnel", "tree", "info"]} w="w-[50px]" s="size-8" /></div>
    <div className="flex h-[437px] w-[697px] shrink-0 flex-col border-y-2 border-r border-[#b1b1b1] bg-white">
      <div className="flex h-[406px] shrink-0">
        <div className="-mt-px min-w-0 flex-1 overflow-hidden">
          {TREE.map(([l, d, ic, t], i) => (
            <div key={i} className={`${PAD[l]} flex h-9 items-center text-[25px] whitespace-nowrap text-black`}>
              <div className="flex w-7 shrink-0 justify-center"><Tri dir={d} c={d === "down" ? "h-2 w-4" : "h-4 w-2"} /></div>
              <div className="ml-[11px] flex w-[34px] shrink-0 justify-center"><Icon n={ic} c="size-8" /></div>
              <span className="ml-[11px] tracking-[.01em]">{t}</span>
            </div>
          ))}
        </div>
        <div className="flex w-[28px] shrink-0 flex-col border-l border-[#bdbdbd] bg-[#e4e4e4]">
          <div className="flex h-[26px] items-center justify-center border-b-2 border-[#b8b8b8] bg-white"><Tri dir="up" c="h-2 w-4" /></div>
          <div className="h-[55px] border-b-2 border-[#b8b8b8] bg-linear-to-r from-[#fdfdfd] to-[#ededed]" />
          <div className="flex-1" />
          <div className="flex h-[29px] items-center justify-center border-t-2 border-[#b8b8b8] bg-white"><Tri c="h-2 w-4" /></div>
        </div>
      </div>
      <div className="flex min-h-0 flex-1 border-t border-[#bdbdbd] bg-[#e4e4e4]">
        <div className="flex w-[27px] items-center justify-center border-r-2 border-[#b8b8b8] bg-white"><Tri dir="left" c="h-4 w-2" /></div>
        <div className="w-[300px] border-r border-[#b0b0b0] bg-linear-to-b from-white to-[#efefef]" />
        <div className="flex-1" />
        <div className="flex w-[29px] items-center justify-center border-x border-[#b8b8b8] bg-white"><Tri dir="right" c="h-4 w-2" /></div>
        <div className="w-[27px] bg-[#ececec]" />
      </div>
    </div>
  </>
);
const Check = ({ c = "size-7" }) => (
  <svg viewBox="0 0 28 28" className={`${c} shrink-0`}><rect x="1" y="1" width="26" height="26" fill="#fff" stroke="#ababab" strokeWidth="2" /><path d="M7.500 13.500l4.500 6.500 8-14" fill="none" stroke="#1a1a1a" strokeWidth="3" /></svg>
);
const layerRow = "flex h-9 items-center text-[25px] font-bold tracking-[.025em] whitespace-nowrap text-[#262626]";
const Layers = () => (
  <>
    <div className="flex h-[15px] shrink-0 items-center justify-center gap-1">{[1, 2, 3, 4, 5, 6].map(i => <i key={i} className="h-[2px] w-[2px] bg-[#b4b4b4]" />)}</div>
    <PanelTitle t="Layers" c="mt-[1px] h-[34px]" />
    <div className="flex h-[64px] shrink-0 items-center pl-[5px]">
      <Cells list={["brush", "group", "eye", "funnel", "epsF"]} w="w-[50px]" s="size-8" />
      <Drop c="w-[24px]" />
      <Cells list={["treeDown", "tree", "remove"]} w="w-[50px]" s="size-8" />
    </div>
    <div className="min-h-0 w-[697px] flex-1 border-t-2 border-r border-b border-[#b1b1b1] bg-white">
      <div className={`${layerRow} pl-[46px]`}><Check /><i className="ml-[27px] h-[2px] w-[2px] bg-[#6d97c4]" /><span className="ml-[28px]">Session3-London LondonSchoolPoints</span></div>
      <div className={`${layerRow} pl-[46px]`}><Icon n="rows" c="size-8" /><span className="ml-[12px]">Session3-London BoroughProfiles</span></div>
      <div className={`${layerRow} pl-[46px]`}><Icon n="rows" c="size-8" /><span className="ml-[12px]">Session3-London schools</span></div>
      <div className={`${layerRow} bg-[#dcdcdc] pl-[46px] text-black`}><Check /><i className="ml-[12px] h-8 w-8 border border-[#c3b391] bg-[#dac29d]" /><span className="ml-[13px] underline decoration-[3px] underline-offset-[4px] [text-decoration-skip-ink:none]">Session3-London LondonBoroughs</span></div>
      <div className={`${layerRow} pl-[12px]`}><Tri c="h-2.5 w-4" /><div className="w-[18px]" /><Check /><Icon n="raster" c="ml-[13px] size-8" /><span className="ml-[11px]">Esri Gray (light)</span></div>
    </div>
  </>
);

/* ---------- map ---------- */
const split = s => s.trim().split(/\s+/).map(p => p.split(",").map(Number));
const up = s => split(s).map(([x, y]) => [700 + x / 2.178, 400 + y / 3]);
const lo = s => split(s).map(([x, y]) => [700 + x / 2.178, 880 + y / 2.703]);
const path = pts => "M" + pts.map(([x, y]) => x.toFixed(1) + " " + y.toFixed(1)).join("L");

const OUTLINE = [
  ...up("20,880 40,838 70,835 85,845 115,850 130,865 160,870 200,858 240,830 262,802 310,775 345,735 372,710 400,732 430,738 460,725 485,715 490,698 510,680 522,695 535,680 542,620 575,605 600,598 607,605 645,580 642,555 655,545 665,530 683,540 682,555 695,562 718,530 740,508 760,460 763,425 795,440 830,420 880,415 910,398 940,408 965,405 990,425 1020,445 1060,438 1150,455 1153,480 1160,570 1153,650 1175,655 1185,670 1240,680 1250,705 1245,745 1290,812 1328,805 1315,825 1350,850 1375,878 1400,870 1420,875 1430,848 1480,850 1620,840"),
  ...lo("1620,905 1518,905 1490,920 1445,965 1440,1030 1458,1068 1445,1090 1380,1105 1365,1088 1338,1085 1335,1050 1310,1018 1290,1040 1270,1100 1262,1090 1245,980 1225,908 1200,885 1185,900 1160,865 1120,868 1092,900 1095,925 1070,965 1035,960 1005,985 1005,1015 970,1080 925,1112 890,1100 860,1070 825,1048 820,1010 808,968 805,940 790,915 760,885 725,860 700,875 680,890 670,920 652,925 630,895 658,858 650,800 630,755 605,740 588,735 582,675 545,680 505,715 475,760 465,790 440,830 430,880 428,905 400,940 370,948 370,860 365,835 385,790 395,755 400,710 418,690 410,640 400,610 375,615 345,585 320,555 285,515 235,538 205,520 212,470 190,460 165,462 130,420 105,430 85,432 60,400 35,395 20,330"),
];
const EALING = up("300,1172 345,1195 375,1205 405,1245 410,1320 430,1320 470,1290 478,1305 455,1325 470,1342 520,1335 535,1308 565,1320 550,1360 555,1410 568,1450 545,1485 550,1525 510,1535 480,1495 455,1505 430,1495 435,1528 400,1550 385,1532 330,1530 300,1520 250,1560 235,1538 210,1545 180,1530 190,1470 228,1390 230,1350 185,1330 120,1295 180,1275 175,1245 220,1220 270,1185");
const HACKNEY = up("1110,1235 1130,1245 1155,1238 1148,1290 1175,1330 1180,1370 1210,1395 1222,1440 1192,1460 1192,1510 1150,1553 1130,1540 1125,1455 1100,1433 1075,1450 1050,1475 995,1445 1010,1415 1000,1370 1005,1310 1030,1300 1070,1285 1095,1270");
const CROYDON = lo("1000,460 950,462 900,475 872,515 890,570 878,600 890,690 915,835 885,835 845,855 840,900 848,950 808,968 820,1010 825,1048 860,1070 890,1100 925,1112 970,1080 1005,1015 1005,985 1035,960 1070,965 1095,925 1092,900 1120,868 1160,865 1185,900 1200,885 1225,908 1200,790 1160,730 1145,665 1120,668 1115,610 1080,575 1075,550 1055,555 1020,510 1005,485");
const BORDERS = [
  ...["150,870 158,950 185,1010 195,1080 210,1140 225,1205", "402,735 405,765 460,860 500,935 545,1010 555,1030 540,1045 550,1110 565,1090 595,1090 625,1150 665,1215 705,1290 735,1270 770,1280 805,1285 820,1330 850,1385 870,1420 910,1405 935,1375 965,1365",
    "505,935 450,970 465,1020 410,1010 355,1060 365,1115 348,1150 350,1195", "718,530 707,570 785,608 800,680 830,720 850,745 845,790 820,835 832,862 880,875 950,868 1045,865 1085,882 1100,840 1120,760 1152,690 1155,650",
    "828,862 825,905 803,938 790,898 775,950 780,1010 760,1085 710,1115 690,1165 655,1180", "1085,882 1060,940 1035,1030 1045,1080 1080,1135 1125,1138 1160,1185 1215,1180 1240,1165",
    "1245,745 1235,775 1218,802 1245,830 1225,900 1225,960 1240,1040 1243,1090 1232,1140 1240,1160 1305,1165 1310,1125 1325,1112 1345,1145 1365,1170 1375,1225 1370,1270 1400,1310 1435,1325 1445,1370 1460,1402 1545,1385",
    "1375,1222 1410,1210 1440,1180 1480,1165 1540,1120", "1225,1450 1250,1490 1290,1498 1360,1490 1400,1480 1430,1410 1460,1402", "780,1085 830,1100 835,1160 870,1220 885,1290 905,1350 915,1400 925,1440 1000,1440",
    "885,1060 925,1110 960,1150 970,1190 1000,1210 1010,1240", "930,1110 945,1075 985,1065 1000,1040", "640,1320 700,1300", "700,1300 690,1370 700,1400 735,1500 790,1495 800,1540 820,1570", "915,1440 890,1450 885,1530 850,1580", "565,1320 600,1330 630,1340", "1530,940 1520,970 1530,1000"].map(up),
  ...["150,70 135,140 145,220 90,265 70,300 25,298", "212,470 210,430 260,365 210,330 240,290 280,280 330,290 365,280 370,240 385,200 430,140 460,125 490,155 520,200 545,205 560,150 590,105 620,130 640,190 660,220 710,238 740,210 750,165",
    "400,610 418,560 415,460 405,415 430,412 440,430 460,430 470,465 495,450 580,350 575,320 540,280 555,230 620,235", "580,375 555,385 560,430 580,520 590,600 605,630 590,680", "605,625 650,665 675,630 720,632", "560,400 620,372 700,365 720,355 720,395 735,430 790,460 830,455 850,465 880,500",
    "720,632 775,600 800,620 875,605", "660,70 700,110 730,155 750,160 780,140 850,130 885,110", "885,110 870,170 820,215 830,260 860,300 855,410 850,460", "925,40 930,110 975,210 950,290 985,380 998,460", "1060,100 1060,180 1085,220 1100,270 1050,310 1040,370 1020,415 1090,440 1150,420 1180,475 1230,440 1280,400",
    "1150,130 1165,180 1240,175 1235,230 1275,290 1280,350 1300,320 1370,420 1400,380 1410,320 1430,290 1420,240", "1400,380 1440,390 1480,450 1520,470", "1070,100 1110,75 1125,75", "1480,160 1500,160 1520,130"].map(lo),
];
const ROADS = [
  ...["100,45 115,80 160,140 180,240 200,330 213,420 215,520 290,600 300,650 370,710", "160,150 240,160 290,185 320,200 420,200 465,150 500,110 543,65 545,45", "543,65 550,120 600,220 605,300 600,430 570,500 545,580 542,620", "590,440 640,450 690,445 710,450 755,430", "420,200 455,270 500,300 540,350 590,430", "25,487 110,465 190,485 215,520", "25,400 70,320 110,297 200,290 260,318 320,305 410,312 455,275", "290,185 265,210 245,265 215,300 195,360", "1088,40 1090,200 1070,290 1060,430", "1155,450 1230,462 1270,462 1330,405 1430,395 1470,435 1530,450", "1490,460 1460,570 1390,670 1355,740 1345,820", "25,375 50,440 75,500 80,560"].map(up),
  ...["25,465 130,485 200,510", "150,490 80,530 45,590", "25,1020 60,980 130,910 190,865 280,835 360,830 370,810", "20,970 100,1025 150,1060 200,1060 260,1025 360,1010 380,1060 410,1105 490,1125 540,1175 570,1230 640,1290 710,1285 780,1240 830,1235 900,1255 960,1285 1100,1275 1170,1225 1270,1225 1320,1195 1400,1190 1568,1115", "365,950 365,1010", "515,715 560,765 590,850 610,940 640,1010 645,1100 680,1225 710,1285", "820,1200 870,1225 900,1255 925,1310 925,1390", "410,1105 380,1170 400,1220 370,1250 385,1300 385,1390", "1010,1020 1040,1080 1045,1240 1100,1320 1105,1390", "820,1170 820,1100", "680,900 670,970 645,1050", "320,600 310,670 340,710 410,690", "580,840 630,840 640,800"].map(lo),
  ...["1437,1290 1460,1320 1480,1365 1505,1372 1525,1395", "1760,1260 1760,1275 1725,1315 1710,1350 1690,1380 1670,1395", "1880,1260 1880,1305 1895,1330 1880,1370 1873,1395", "1890,1310 1910,1278 1950,1290 2010,1330 2060,1365 2100,1392 2125,1395", "2400,1395 2420,1370 2415,1340 2450,1312 2480,1310 2545,1275", "2470,1255 2530,1290 2556,1312"].map(split),
];
const INNER_ROADS = [
  ...["525,700 530,790 580,880 580,960 640,1060 700,1050", "1040,490 1030,640 980,760 970,830", "25,1210 70,1235 180,1240", "830,850 900,835 1000,850 1100,870 1160,920 1200,960", "1300,890 1290,960 1310,1060 1290,1100", "600,900 660,990 740,930 790,870"].map(up),
  ...["25,90 150,110 260,150 380,120", "490,690 540,620 600,560 640,420", "670,770 780,750 880,720", "1100,450 1180,680 1300,700 1380,720 1440,760 1500,770", "1000,340 1140,320 1200,315", "1260,150 1300,210 1420,250 1500,270"].map(lo),
];
const PATCHES = [
  ...["230,45 430,45 410,110 300,130 240,100", "40,300 90,340 150,400 150,450 210,540 90,560 60,420", "1340,45 1530,45 1520,110 1400,100", "60,620 200,600 200,700 80,760", "1330,560 1440,560 1420,680 1350,700", "270,190 310,230 280,320 255,270"].map(up),
  ...["25,690 120,650 260,700 240,760 60,830 25,780", "480,780 560,730 600,900 520,950 440,900", "210,1140 320,1070 390,1120 300,1230", "640,1340 760,1330 760,1390 620,1390", "380,990 470,980 560,1060 440,1090", "1030,1010 1120,950 1110,1060 1040,1090"].map(lo),
  ...["1430,1285 1540,1300 1500,1350 1490,1390 1450,1340", "1830,1300 1880,1275 1870,1320 1820,1330", "1890,1330 1945,1370 1925,1385 1900,1360"].map(split),
];
const OUT_DOTS = [
  ...up("705,204 657,221 876,188 1112,210 738,251 751,272 934,272 945,312 890,329 799,324 707,326 707,341 729,326 742,356 718,381 755,390 668,363 631,366 585,393 648,413 670,416 461,423 1028,262 1045,261 1040,288 1106,257 1109,283 1032,312 1056,315 1062,330 1082,318 1093,312 1030,333 1106,354 1036,372 1086,375 1108,393 1102,414 1080,432 1128,435 1195,402 1219,402 1240,414 1229,438 1271,399 1241,555 342,467 324,483 294,503 392,470 397,542 342,581 319,567 379,614 461,540 446,570 483,560 501,558 514,591 487,594 497,627 527,621 535,645 497,648 424,681 220,573 139,602 240,603 42,621 122,636 138,639 150,642 179,630 222,636 163,648 174,666 29,663 54,660 101,666 117,681 139,681 210,675 222,678 237,684 254,663 272,675 289,666 30,696 82,717 189,708 265,705 259,726 272,723 326,708 310,732 66,756 100,753 181,780 217,783 167,792 181,804 113,810 202,828 176,843 1400,548 1404,564 1350,564 1415,594 1402,600 1324,615 1359,624 1402,624 1487,627 1328,660 1356,663 1302,672 1337,708 1278,735 1281,753 1352,750 1396,759 1407,756 1321,765 1350,834 1414,855"),
  ...lo("27,427 54,427 82,448 61,448 104,448 145,448 113,513 126,505 140,505 165,518 128,538 178,535 41,600 48,610 70,613 67,632 163,610 248,543 296,556 257,581 278,581 311,581 345,619 320,630 308,643 320,656 345,646 135,664 180,664 153,686 167,686 115,724 175,719 200,711 272,673 257,702 361,684 386,654 395,681 261,754 286,757 298,775 259,792 332,795 187,848 248,894 290,933 296,940 235,1019 250,1056 303,1138 309,1132 420,1010 426,1019 459,1010 448,1038 459,1038 479,1043 355,1040 357,1056 375,1078 405,1073 413,1086 396,1094 426,1065 551,1059 537,702 560,711 568,721 520,738 509,759 524,759 516,792 559,819 575,830 581,821 535,848 503,856 557,859 524,873 492,894 501,905 512,908 566,897 581,900 509,927 503,940 535,948 548,943 588,940 631,957 681,965 690,965 699,973 667,1000 668,1024 622,1019 620,1051 640,1103 636,1116 614,1146 783,930 1141,981 1097,1003 1047,973 1012,1027 1003,1089 1005,1100 1040,1089 1130,1124 1093,1186 923,1178 973,1211 1003,1208 1017,1222 1040,1203 779,1273 833,1270 821,1297 868,1265 873,1284 860,1289 934,1322 1206,1249 1213,1246 1224,1265 1254,1238 1280,1281 1252,1319 1404,1200 1295,1103 1491,1003 1544,1140 1555,1181 1366,865"),
  [1437, 1289], [1409, 1301], [1414, 1316],
];
/* dense school clusters: centre x, y, spread, count */
const CLUSTERS = [
  [1163, 752, 16, 60], [1170, 770, 14, 30], [1042, 805, 16, 60], [1095, 770, 30, 40], [1055, 855, 26, 50], [1003, 850, 18, 45], [1090, 832, 26, 40],
  [1178, 860, 18, 60], [1200, 845, 26, 40], [1040, 905, 24, 60], [1060, 985, 14, 40], [1115, 920, 26, 50], [1132, 938, 14, 30], [970, 905, 20, 55],
  [1085, 1000, 22, 30], [1195, 1015, 26, 40], [1150, 970, 30, 35], [1065, 945, 30, 40], [1165, 700, 12, 22], [990, 735, 14, 26], [1275, 810, 24, 35],
  [1285, 850, 28, 25], [1340, 905, 24, 30], [990, 950, 24, 35], [1130, 1140, 22, 18], [1160, 690, 20, 18], [930, 905, 16, 18], [1330, 770, 18, 18],
];
const inside = (x, y, poly) => {
  let c = false;
  for (let i = 0, j = poly.length - 1; i < poly.length; j = i++) {
    const [xi, yi] = poly[i], [xj, yj] = poly[j];
    if (yi > y !== yj > y && x < ((xj - xi) * (y - yi)) / (yj - yi) + xi) c = !c;
  }
  return c;
};
const schoolDots = () => {
  let seed = 20211020;
  const rnd = () => {
    seed = (seed + 0x6d2b79f5) | 0;
    let t = Math.imul(seed ^ (seed >>> 15), 1 | seed);
    t = (t + Math.imul(t ^ (t >>> 7), 61 | t)) ^ t;
    return ((t ^ (t >>> 14)) >>> 0) / 4294967296;
  };
  const out = [];
  for (let i = 0; i < 7600; i++) {
    const x = 712 + rnd() * 692, y = 532 + rnd() * 790, k = rnd();
    const core = Math.exp(-(((x - 1110) / 200) ** 2 + ((y - 870) / 125) ** 2));
    const edge = y > 1150 || y < 640 ? 0.13 : x > 1285 && y > 1060 ? 0.12 : 0.25;
    if (k < edge + 0.5 * core && inside(x, y, OUTLINE)) {
      out.push([x, y]);
      if (rnd() < 0.12) out.push([x + 5, y + (rnd() - 0.5) * 9]);
    }
  }
  for (const [cx, cy, r, n] of CLUSTERS)
    for (let i = 0; i < n; i++) out.push([cx + (rnd() + rnd() - 1) * r * 1.6, cy + (rnd() + rnd() - 1) * r * 1.6]);
  return out;
};
const DOTS = [...OUT_DOTS, ...schoolDots()].map(([x, y]) => `M${Math.round(x) - 2} ${Math.round(y) - 2}h4v4h-4z`).join("");

const MapCanvas = () => (
  <svg viewBox="712 414 1844 979" preserveAspectRatio="none" className="block min-h-0 w-full flex-1 bg-[#efefef]">
    <g fill="#e8e8e9">{PATCHES.map((p, i) => <path key={i} d={path(p) + "Z"} strokeLinejoin="round" stroke="#e8e8e9" strokeWidth="8" />)}</g>
    <g fill="#cfcfd6"><path d="M712 1052q14 4 16 14t-10 14h-6zM778 1100l14-4 8 10-4 12-12 6-8-10zM908 458l12-2-8 20-5 4zM1240 420l12-4-10 32-4-2zM1226 462l6-4 1 10 7 2-4 6h-9z" /></g>
    <g fill="none" stroke="#fafafa" strokeWidth="2.500" strokeLinejoin="round">{ROADS.map((p, i) => <path key={i} d={path(p)} />)}</g>
    <path d={path(OUTLINE)} fill="#e8be84" stroke="#a19d93" strokeWidth="3" strokeLinejoin="round" />
    <path d={path(up("1135,560 1155,570 1150,690 1110,800 1060,960 1035,1040 1050,960 1110,780"))} fill="#deb47b" />
    <g fill="none" stroke="#edc794" strokeWidth="2">{INNER_ROADS.map((p, i) => <path key={i} d={path(p)} />)}</g>
    <g fill="none" stroke="#9a8c76" strokeWidth="3" strokeLinejoin="round">{BORDERS.map((p, i) => <path key={i} d={path(p)} />)}</g>
    <g fill="#ffff33" stroke="#8f8a6c" strokeWidth="2" strokeLinejoin="round">{[EALING, HACKNEY, CROYDON].map((p, i) => <path key={i} d={path(p) + "Z"} />)}</g>
    <path d={DOTS} fill="#3f658f" stroke="#3f658f" strokeOpacity=".28" strokeWidth="1.200" />
  </svg>
);

/* ---------- status bar ---------- */
const box = "flex shrink-0 items-center rounded-[5px] border-2 border-[#a9a9a9] bg-linear-to-b from-white to-[#f4f4f4]";
const Spin = () => <div className="flex h-full w-[28px] flex-col items-center justify-center gap-2 border-l-2 border-[#a9a9a9]"><Tri dir="up" c="h-2 w-3.5" /><Tri c="h-2 w-3.5" /></div>;
const StatusBar = () => (
  <div className="flex h-[63px] shrink-0 items-center bg-linear-to-b from-[#ececec] to-[#d2d2d2] pt-[4px] text-[22px] text-[#111]">
    <div className="ml-[6px] flex h-[47px] w-[428px] shrink-0 items-center rounded-[5px] border-2 border-[#a9a9a9] bg-white pl-4 text-[25px] text-[#767676]">
      <svg viewBox="0 0 26 26" className="mr-[14px] size-[26px]"><circle cx="10.500" cy="10" r="8" fill="none" stroke="#8a8a8a" strokeWidth="2.200" /><path d="M16 16l8 8" stroke="#8a8a8a" strokeWidth="3" /></svg>
      <span className="tracking-[.012em]">Type to locate (⌘K)</span>
    </div>
    <span className="ml-[400px] w-[123px] shrink-0">Coordinate</span>
    <div className={`${box} h-[43px] w-[204px] justify-center text-[23px] tracking-[.01em]`}>563230,158152</div>
    <Icon n="gps" c="ml-[7px] size-9" />
    <span className="ml-[23px] w-[65px] shrink-0">Scale</span>
    <div className={`${box} h-[46px] w-[184px] text-[23px]`}><span className="flex-1 pl-[6px]">1:665592</span><div className="flex h-full w-[39px] items-center justify-center border-l-2 border-[#a9a9a9]"><Tri c="h-2.5 w-4" /></div></div>
    <svg viewBox="0 0 26 32" className="ml-[24px] h-8 w-[26px] shrink-0"><path d="M5 16V9q0-7 8-7t8 7v7" fill="none" stroke="#9a9a90" strokeWidth="3.400" /><rect x="1" y="14" width="24" height="16" rx="2" fill="#5d5d5d" /></svg>
    <span className="ml-[17px] w-[107px] shrink-0">Magnifier</span>
    <div className={`${box} h-[46px] w-[181px] text-[23px]`}><span className="flex-1 pl-[8px]">100%</span><Spin /></div>
    <span className="ml-[19px] w-[106px] shrink-0">Rotation</span>
    <div className={`${box} h-[43px] w-[186px] text-[23px]`}><span className="flex-1 pl-[8px]">0,0 °</span><Spin /></div>
    <Check c="ml-[12px] size-7" />
    <span className="ml-[11px] w-[104px] shrink-0">Render</span>
    <Icon n="crs" c="size-8" />
    <span className="ml-[4px] w-[176px] shrink-0">EPSG:27700</span>
    <svg viewBox="0 0 34 32" className="h-8 w-[34px] shrink-0"><path d="M17 1.500Q32.500 2 32.500 14q0 6-4 8.500 1 3.500 3 6.500-5 .5-8-3.500-3 1-6.500 1Q1.500 26 1.500 14T17 1.500z" fill="#575757" /><g fill="#fff"><circle cx="9.500" cy="14" r="2.600" /><circle cx="17" cy="14" r="2.600" /><circle cx="24.500" cy="14" r="2.600" /></g></svg>
  </div>
);

/* ---------- attribute table ---------- */
const ROWS = [
  ["1", "Kingston upo...", "E09000021", "3726,117"], ["2", "Croydon", "E09000008", "8649,441", 1], ["3", "Bromley", "E09000006", "15013,487"],
  ["4", "Hounslow", "E09000018", "5658,541"], ["5", "Ealing", "E09000009", "5554,428", 1], ["6", "Havering", "E09000016", "11445,735", 1],
  ["7", "Hillingdon", "E09000017", "11570,063"], ["8", "Harrow", "E09000015", "5046,33"], ["", "", "E09000005", "4323,27"],
  ["", "", "E09000003", "8674,837"], ["", "", "E09000023", "3531,706"], ["", "", "E09000011", "5044,19"], ["", "", "E09000004", "6428,649"],
];
const shade = (sel, n, i) => sel ? "bg-[#b1d5ff]" : i % 2 ? "bg-[#f4f5f4]" : "bg-white";
const grid = "grid grid-cols-[41px_200px_200px_200px_200px_200px_81px]";
const AttributeTable = () => (
  <div className="absolute top-[228px] left-[1404px] flex h-[1026px] w-[1153px] flex-col overflow-hidden rounded-[20px] bg-[#ececec]">
    <div className="flex h-[57px] shrink-0 items-center border-b-2 border-[#d0cdcd] bg-[#f6f2f1] pl-[16px]">
      <div className="flex w-[128px] shrink-0 gap-4">
        <i className="size-6 rounded-full bg-[#fc605b]" /><i className="size-6 rounded-full bg-[#fdbc40]" /><i className="size-6 rounded-full bg-[#34c84a]" />
      </div>
      <span className="text-[25.500px] font-bold tracking-[.004em] whitespace-nowrap text-[#464444]">Session3-London LondonBoroughs — Features Total: 33, Filtered: 33, Select...</span>
    </div>
    <div className="flex h-[61px] shrink-0 items-center border-b border-[#b8b8b8] pb-[3px] pl-[6px]">
      <Cells list={["pencil", "multi", "savePencil", "refresh"]} w="w-[50px]" s="size-8" /><Sep c="w-4" />
      <Cells list={["rowNew", "trash", "scissors", "copy", "paste"]} w="w-[50px]" s="size-8" /><Sep c="w-[13px]" />
      <Cells list={["eps", "bars", "invert", "desel", "funnel", "moveTop", "panY", "zoomSel"]} w="w-[50px]" s="size-8" /><Sep c="w-[15px]" />
      <Cells list={["colNew", "colDel", "calcEdit", "abacus"]} w="w-[50px]" s="size-8" /><Sep c="w-[15px]" />
      <svg viewBox="0 0 18 16" className="ml-[11px] h-4 w-[18px]" fill="none" stroke="#444" strokeWidth="2.400"><path d="M2 2l6 6-6 6M10 2l6 6-6 6" /></svg>
    </div>
    <div className="flex h-[820px] shrink-0">
      <div className="w-[1122px] shrink-0 overflow-hidden bg-white">
        <div className={`${grid} h-[35px] border-b-2 border-[#a9a9a9] bg-linear-to-b from-[#fafafa] to-[#eaeaea] text-[21.500px] tracking-[.02em] text-[#333]`}>
          <div />
          {["fid", "objectid", "name", "gss_code", "hectares"].map(h => <div key={h} className="flex items-center justify-center border-r-2 border-[#c4c4c4] pt-1">{h}</div>)}
          <div className="flex items-center justify-end pt-1">non</div>
        </div>
        {ROWS.map(([n, name, code, ha, sel], i) => (
          <div key={code} className={`${grid} h-[60px] text-[25px] tracking-[.008em] text-black ${shade(sel, n, i)}`}>
            <div className="flex items-center border-r-2 border-b-2 border-[#a9a9a9] bg-linear-to-b from-[#f8f8f8] to-[#e8e8e8] pt-0.5 pl-[6px] text-[22px] text-[#333]">{n}</div>
            {i === 0
              ? <div className="flex items-center justify-end border-r border-b border-[#c2c2c2]"><div className="flex h-[57px] w-full items-center justify-end rounded-sm border-4 border-[#2bfb80] bg-linear-to-b from-white to-[#eef2f8] pr-[3px]">{n}</div></div>
              : <div className="flex items-center justify-end border-r border-b border-[#c2c2c2] pr-[7px]">{n}</div>}
            <div className="flex items-center justify-end border-r border-b border-[#c2c2c2] pr-[7px]">{n}</div>
            <div className="flex items-center border-r border-b border-[#c2c2c2] pl-[7px] whitespace-nowrap">{name}</div>
            <div className="flex items-center border-r border-b border-[#c2c2c2] pl-[7px]">{code}</div>
            <div className="flex items-center justify-end border-r border-b border-[#c2c2c2] pr-[7px]">{ha}</div>
            <div className="border-b border-[#c2c2c2]" />
          </div>
        ))}
      </div>
      <div className="flex w-[29px] shrink-0 flex-col border-x border-[#b8b8b8] bg-[#e4e4e4]">
        <div className="flex h-[28px] items-center justify-center border-b-2 border-[#b8b8b8] bg-white"><Tri dir="up" c="h-2 w-4" /></div>
        <div className="h-[301px] border-b-2 border-[#b8b8b8] bg-linear-to-r from-[#fdfdfd] to-[#ededed]" />
        <div className="flex-1" />
        <div className="flex h-[30px] items-center justify-center border-t-2 border-[#b8b8b8] bg-white"><Tri c="h-2 w-4" /></div>
      </div>
    </div>
    <div className="flex h-[29px] shrink-0 border-y border-[#b0b0b0] bg-[#e4e4e4]">
      <div className="w-[748px] border-r-2 border-[#b0b0b0] bg-linear-to-b from-white to-[#f0f0f0]" />
      <div className="flex-1" />
      <div className="flex w-[29px] items-center justify-center border-x border-[#b8b8b8] bg-white"><Tri dir="right" c="h-4 w-2" /></div>
      <div className="w-[31px] bg-[#ececec]" />
    </div>
    <div className="flex min-h-0 flex-1 items-center justify-between pt-0.5 pr-[7px] pl-[6px]">
      <div className="flex h-[44px] w-[240px] items-center rounded-md border-2 border-[#ababab] bg-[#dadada] pl-[4px] text-[20px] text-[#222]">
        <Icon n="funnel" c="size-8" /><span className="ml-[4px] whitespace-nowrap">Show All Features</span><span className="pt-6 pl-3"><Tri c="h-[6px] w-3" /></span>
      </div>
      <div className="flex items-center gap-3"><Icon n="form" c="size-[29px]" /><div className="flex h-[46px] w-[48px] items-center justify-center rounded-md border-2 border-[#a8a8a8] bg-[#d9d9d9]"><Icon n="table" c="size-[30px]" /></div></div>
    </div>
  </div>
);

const ITEMS = [["funnel", "Show All Features"], ["funnel", "Show Selected Features"], ["funnel", "Show Features Visible On Map"], ["funnel", "Show Edited and New Features"], [null, "Field Filter", 1], ["funnel", "Advanced Filter (Expression)"], ["starO", "Stored Filter Expressions", 1]];
const FilterMenu = () => (
  <div className="absolute top-[868px] left-[1411px] h-[336px] w-[569px] border-x-2 border-b-2 border-[#a6a6a6] bg-white shadow-[0_8px_22px_rgba(0,0,0,.3)]">
    {ITEMS.map(([ic, t, sub]) => (
      <div key={t} className="flex h-12 items-center pt-0.5 pl-3 text-[25px] tracking-[.008em] text-[#262626]">
        <div className="w-[30px] shrink-0">{ic && <Icon n={ic} c="size-[30px]" />}</div>
        <span className="ml-[11px] flex-1 whitespace-nowrap">{t}</span>
        {sub && <span className="mr-[10px]"><Tri dir="right" c="h-4 w-2" /></span>}
      </div>
    ))}
  </div>
);

const Annotations = () => (
  <svg viewBox="0 0 2560 1460" className="pointer-events-none absolute top-0 left-0 h-[1460px] w-[2560px]">
    <g fill="none" stroke="#b21e12" strokeWidth="11">
      <ellipse cx="1641.500" cy="145" rx="54" ry="50.500" strokeWidth="11.500" />
      <circle cx="887.500" cy="900" r="111" /><circle cx="1204.500" cy="861.500" r="65.500" /><circle cx="1154" cy="1173" r="129" />
      <path d="M909 799L1380 668M1266 838L1380 764M1251 1096L1668 534" />
      <rect x="1403" y="865" width="591" height="399" strokeWidth="12" />
    </g>
    <path d="M1427 656L1362.500 642.700 1379.500 699zM1421 738L1356.500 745 1388 794zM1694.600 498L1636 528 1683.500 563z" fill="#b21e12" />
  </svg>
);

export default function App() {
  return (
    <div className="relative flex h-[1460px] w-[2560px] flex-col overflow-hidden bg-linear-to-r from-[#1b2b55] from-20% via-[#8a6a90] via-50% to-[#3a1a3c] text-black [font-family:Inter,sans-serif]">
      <MenuBar />
      <div className="flex h-[2px] shrink-0"><i className="w-[535px] bg-[#b02348]" /><i className="flex-1 bg-[#1f4a66]" /></div>
      <div className="flex h-[1406px] w-[2558px] shrink-0 flex-col overflow-hidden rounded-[20px] bg-[#ececec]">
        <div className="flex h-[59px] shrink-0 items-center border-b-2 border-[#d5cfd1] bg-[#eee8ea] pt-px pl-[14px]">
          <div className="flex gap-4">{[1, 2, 3].map(i => <i key={i} className="size-6 rounded-full border border-[#b9b3b5] bg-[#d2ccce]" />)}</div>
          <span className="ml-[1054px] text-[25px] font-bold tracking-[.012em] text-[#aba5a7]">*London — QGIS</span>
        </div>
        <Toolbars />
        <div className="flex min-h-0 flex-1">
          <div className="flex w-[710px] shrink-0 flex-col"><Browser /><Layers /></div>
          <div className="mt-[3px] flex min-w-0 flex-1 flex-col border-b border-l border-[#b1b1b1]">
            <div className="flex h-[72px] shrink-0 items-center border-2 border-[#dca725] bg-[#ffc730] pt-[3px] pl-[18px] text-[25px] tracking-[.012em] whitespace-nowrap">
              <svg viewBox="0 0 48 44" className="mr-[18px] h-[42px] w-[48px]"><path d="M24 3L46 41H2z" fill="#f2a93c" stroke="#b0410e" strokeWidth="2" strokeLinejoin="round" /><path d="M24 8L41 38H7z" fill="none" stroke="#fbc46b" strokeWidth="1.500" /><path d="M24 15v13M24 31v4" stroke="#222" strokeWidth="3.600" /></svg>
              Used a ballpark transform from EPSG:27700 to EPSG:4326
            </div>
            <MapCanvas />
          </div>
        </div>
        <StatusBar />
      </div>
      <div className="absolute top-[228px] left-[1404px] h-[1026px] w-[1153px] rounded-[20px] shadow-[0_36px_80px_10px_rgba(0,0,0,.48),0_0_2px_1px_rgba(0,0,0,.35)]" />
      <AttributeTable />
      <FilterMenu />
      <Annotations />
      <div className="absolute top-[57px] left-[1711px] text-[53px] leading-[62px] font-bold tracking-[.004em] whitespace-nowrap text-[#85160b] [font-family:'Liberation_Sans',sans-serif]">Open the attribute table</div>
    </div>
  );
}
